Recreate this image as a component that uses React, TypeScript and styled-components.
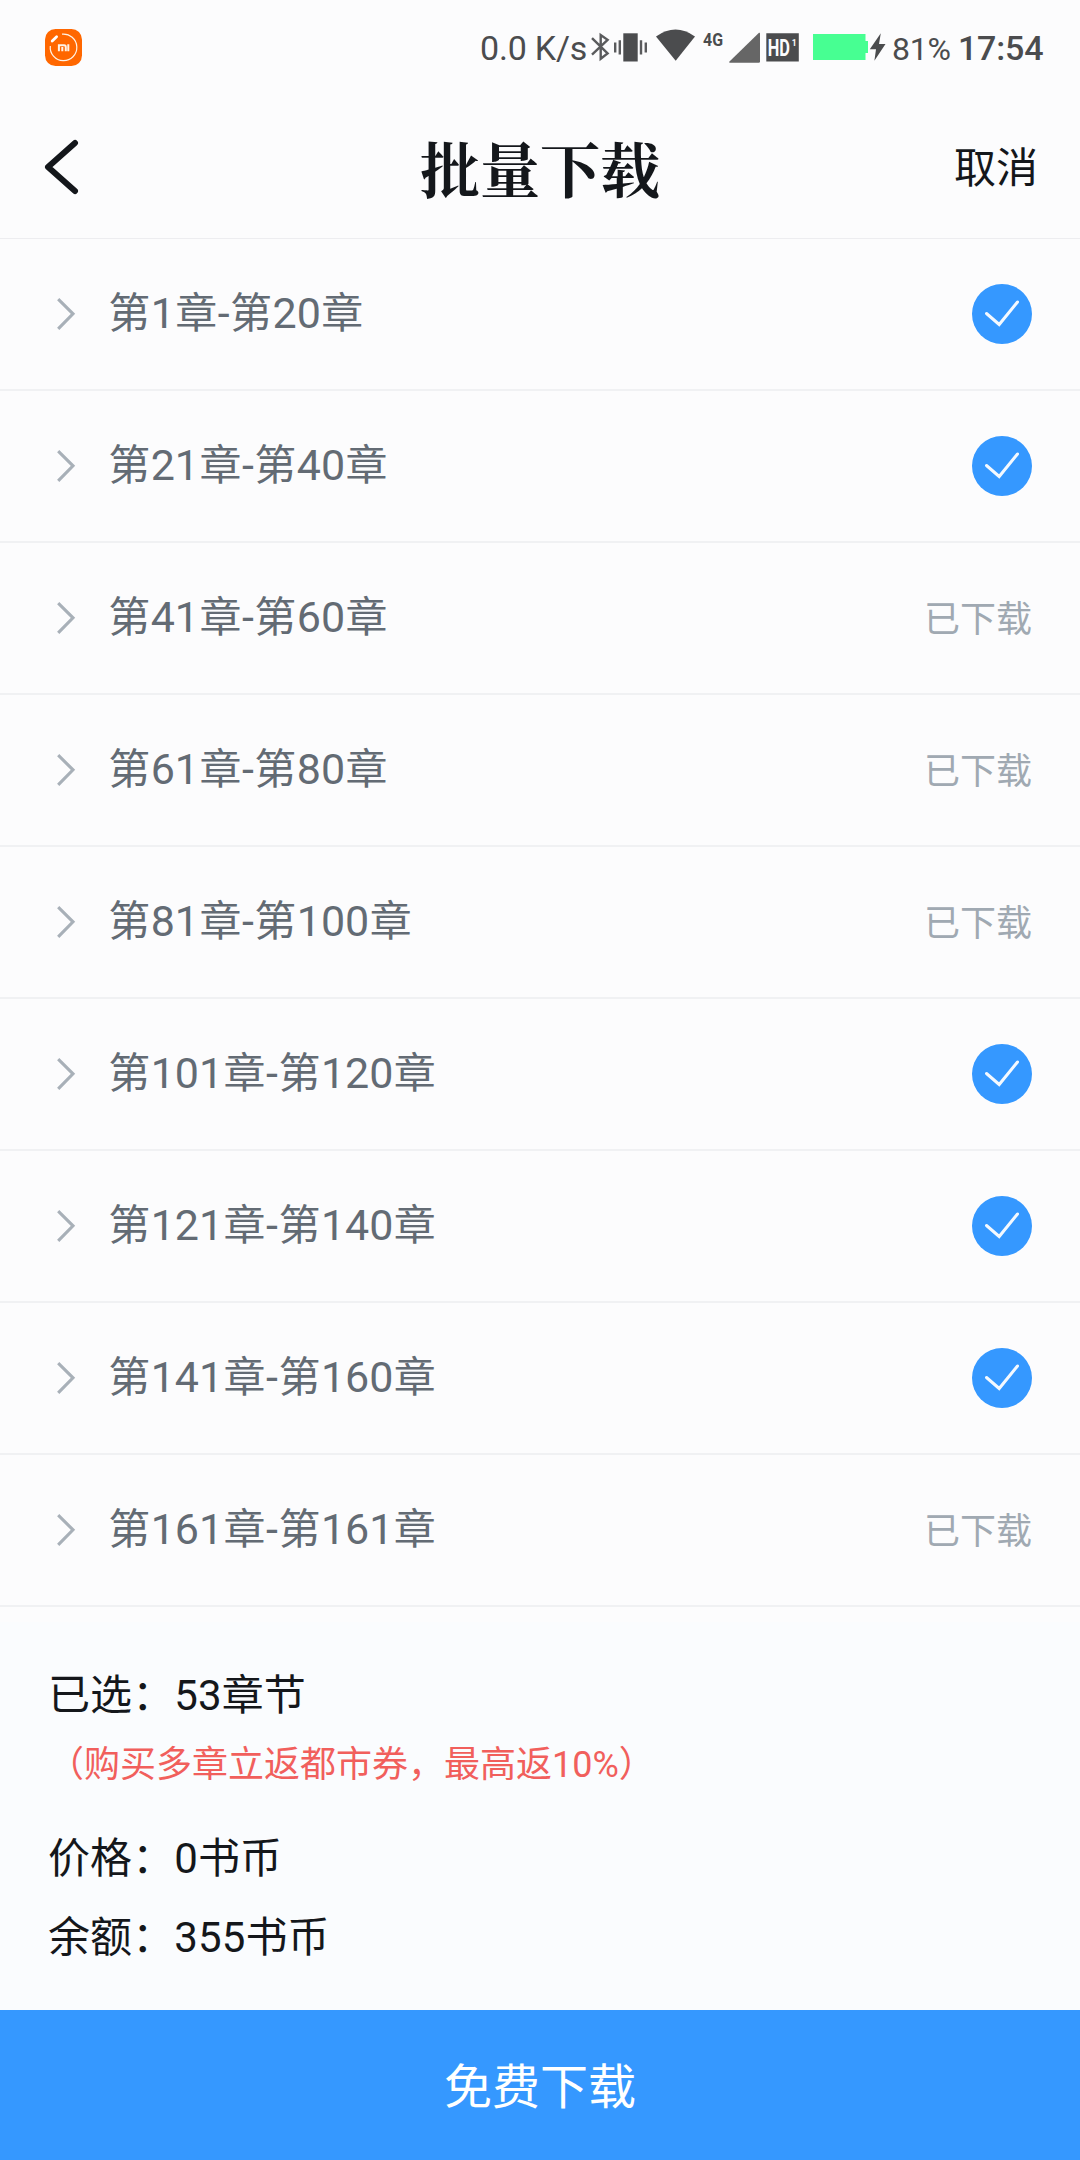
import React from "react";
import styled, { createGlobalStyle } from "styled-components";

const GlobalStyle = createGlobalStyle`
  * { box-sizing: border-box; }
  body { margin: 0; background: #fcfcfd; }
`;

const Screen = styled.div`
  width: 1080px;
  height: 2160px;
  display: flex;
  flex-direction: column;
  background: #fcfcfd;
  color: #14171b;
  font-family: Roboto, "Noto Sans CJK SC", sans-serif;
  overflow: hidden;
`;

const StatusBar = styled.div`
  height: 96px;
  padding: 0 37px 0 45px;
  display: flex;
  align-items: center;
  justify-content: space-between;
  color: #4b4c4e;
`;

const StatusText = styled.span<{ $size: number; $weight?: number; $width: number; $gap?: number; $drop?: number }>`
  width: ${(p) => p.$width}px;
  margin-left: ${(p) => p.$gap ?? 0}px;
  padding-top: ${(p) => p.$drop ?? 0}px;
  font-size: ${(p) => p.$size}px;
  font-weight: ${(p) => p.$weight ?? 400};
  line-height: 38px;
  letter-spacing: -0.2px;
  white-space: nowrap;
`;

const Indicators = styled.div`
  height: 40px;
  display: flex;
  align-items: center;
`;

const Header = styled.header`
  height: 143px;
  padding: 0 42px 0 44px;
  display: grid;
  grid-template-columns: 120px 1fr 122px;
  align-items: center;
  border-bottom: 1px solid #ededf0;
`;

const Title = styled.h1`
  margin: 0;
  font-family: "Noto Serif CJK SC", "Source Han Serif SC", "Noto Serif SC", "Songti SC", "Noto Sans CJK SC", serif;
  font-size: 60px;
  line-height: 80px;
  font-weight: 700;
  text-align: center;
`;

const CancelButton = styled.button`
  border: 0;
  padding: 3px 0 0;
  background: none;
  color: inherit;
  font: inherit;
  font-size: 42px;
  line-height: 60px;
  text-align: right;
`;

const BackButton = styled.button`
  border: 0;
  padding: 0;
  background: none;
  display: flex;
`;

const ChapterRow = styled.div`
  height: 152px;
  padding: 0 48px 0 54px;
  display: flex;
  align-items: center;
  border-bottom: 2px solid #f0f1f3;
`;

const ChapterRange = styled.span`
  flex: 1;
  margin-left: 30.2px;
  color: #636b74;
  font-size: 42px;
  line-height: 60px;
  letter-spacing: 0.9px;
`;

const Digits = styled.span`
  margin: 0 0.4px 0 -0.4px;
  font-size: 43px;
  line-height: 1;
  letter-spacing: 0;
`;

const Downloaded = styled.span`
  margin-top: 4px;
  color: #a0a9b2;
  font-size: 36px;
  line-height: 50px;
`;

const Summary = styled.section`
  flex: 1;
  margin-top: 15px;
  padding: 44px 48px 0;
  background: #fafcfe;
`;

const SummaryLine = styled.p<{ $height: number }>`
  margin: 0;
  height: ${(p) => p.$height}px;
  font-size: 42px;
  line-height: 60px;
  letter-spacing: 0.1px;
`;

const Promotion = styled.p`
  margin: 0;
  height: 94px;
  color: #f15f5c;
  font-size: 36px;
  line-height: 60px;
`;

const DownloadButton = styled.button`
  height: 150px;
  border: 0;
  padding: 0 0 5px;
  background: #3598ff;
  color: #fff;
  font: inherit;
  font-size: 48px;
`;

const chapters = [
  { from: 1, to: 20, selected: true },
  { from: 21, to: 40, selected: true },
  { from: 41, to: 60, selected: false },
  { from: 61, to: 80, selected: false },
  { from: 81, to: 100, selected: false },
  { from: 101, to: 120, selected: true },
  { from: 121, to: 140, selected: true },
  { from: 141, to: 160, selected: true },
  { from: 161, to: 161, selected: false },
];

const MiBadge = () => (
  <svg width="37" height="38" viewBox="0 0 37 38">
    <rect width="37" height="37" rx="10.5" fill="#ff6700" />
    <path d="M17 5.2A13.3 13.3 0 1 1 5.3 17" fill="none" stroke="#fff3e6" strokeWidth="1.2" />
    <path d="M7.2 12 11.6 7.8" stroke="#fff" strokeWidth="2.8" strokeLinecap="round" />
    <path d="M13.9 22.2V16.2h5.200q1.700 0 1.700 1.700v4.300M17.300 18v4.200M23.300 15.300v6.900" fill="none" stroke="#fff3e6" strokeWidth="2" />
  </svg>
);

const StatusIcons = () => (
  <svg width="302" height="40" viewBox="588 28 302 40">
    <g fill="none" stroke="#5a5b5d" strokeWidth="2.4">
      <path d="M592 38.2 607.6 53.4 600.7 58.8V35L607.6 39.8 592 54.6" />
      <path d="M615.2 42.5v10M619.8 40.2v14.3M641 40.2v14.3M645.8 42.5v10" />
    </g>
    <path d="M623.3 33.3h14.4v28.2h-14.4z" fill="#4b4c4e" />
    <path d="M656 36.4Q675.5 22.6 695 36.4L675.7 60.8Z" fill="#4b4c4e" />
    <text x="703" y="46.2" fontSize="18.5" fontWeight="700" fill="#4b4c4e" textLength="20" lengthAdjust="spacingAndGlyphs" fontFamily="Roboto, sans-serif">4G</text>
    <path d="M759 32.8q1-.5 1 .8V61.5q0 1.3-1.3 1.3H730q-1.5 0-.5-1.2Z" fill="#666" />
    <path d="M766.3 33.2h32.5v28.3h-32.5z" fill="#4b4c4e" />
    <text x="767.8" y="56" fontSize="23" fontWeight="700" fill="#fcfcfd" textLength="22.2" lengthAdjust="spacingAndGlyphs" fontFamily="Roboto, sans-serif">HD</text>
    <text x="791.8" y="46" fontSize="8.5" fontWeight="700" fill="#fcfcfd" fontFamily="Roboto, sans-serif">1</text>
    <path d="M813 34h52.5v7h2.5v12h-2.5v7H813z" fill="#47ff92" />
    <path d="M880.8 33.3 869.8 49.2h6.2l-1.6 11.5L885.5 44h-6.5z" fill="#4b4c4e" />
  </svg>
);

const BackIcon = () => (
  <svg width="36" height="60" viewBox="44 137 36 60">
    <path d="M75 143 48 167 75 191" fill="none" stroke="#14171b" strokeWidth="6" strokeLinecap="round" strokeLinejoin="round" />
  </svg>
);

const Chevron = () => (
  <svg width="24" height="36" viewBox="0 0 24 36">
    <path d="M4.2 3.2 19 17.8 4.2 32.8" fill="none" stroke="#a8b0b8" strokeWidth="3.1" />
  </svg>
);

const SelectedIcon = () => (
  <svg width="60" height="60" viewBox="0 0 60 60">
    <circle cx="30" cy="30" r="30" fill="#3598ff" />
    <path d="M14.5 29.5 27.2 40.5 45.5 18" fill="none" stroke="#f4f9ff" strokeWidth="3" strokeLinecap="round" />
  </svg>
);

export default function App() {
  return (
    <Screen>
      <GlobalStyle />
      <StatusBar>
        <MiBadge />
        <Indicators>
          <StatusText $size={34} $width={108}>0.0 K/s</StatusText>
          <StatusIcons />
          <StatusText $size={32} $width={66} $gap={2} $drop={2}>81%</StatusText>
          <StatusText $size={34} $weight={500} $width={85}>17:54</StatusText>
        </Indicators>
      </StatusBar>
      <Header>
        <BackButton aria-label="返回"><BackIcon /></BackButton>
        <Title>批量下载</Title>
        <CancelButton>取消</CancelButton>
      </Header>
      <main>
        {chapters.map((c) => (
          <ChapterRow key={c.from}>
            <Chevron />
            <ChapterRange>
              第<Digits>{c.from}</Digits>章<Digits>-</Digits>第<Digits>{c.to}</Digits>章
            </ChapterRange>
            {c.selected ? <SelectedIcon /> : <Downloaded>已下载</Downloaded>}
          </ChapterRow>
        ))}
      </main>
      <Summary>
        <SummaryLine $height={69}>已选：53章节</SummaryLine>
        <Promotion>（购买多章立返都市券，最高返10%）</Promotion>
        <SummaryLine $height={79}>价格：0书币</SummaryLine>
        <SummaryLine $height={79}>余额：355书币</SummaryLine>
      </Summary>
      <DownloadButton>免费下载</DownloadButton>
    </Screen>
  );
}
